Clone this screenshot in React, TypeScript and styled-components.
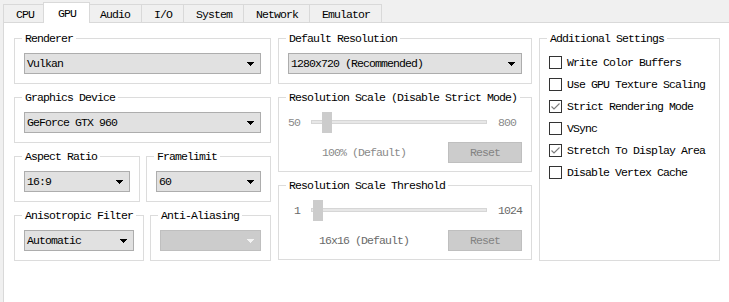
import React from "react";
import styled, { createGlobalStyle } from "styled-components";

const GlobalStyle = createGlobalStyle`
  html, body { margin: 0; padding: 0; background: #f0f0f0; }
  body {
    font-family: "Liberation Mono", "DejaVu Sans Mono", monospace;
    font-size: 11.5px;
    letter-spacing: -0.9px;
    color: #000;
  }
  * { box-sizing: border-box; }
`;

const Window = styled.div`
  width: 729px;
  height: 302px;
  overflow: hidden;
  background: #f0f0f0;
`;

const TabBar = styled.div`
  display: flex;
  align-items: flex-end;
  height: 22px;
  padding-left: 4px;
`;

const Tab = styled.div<{ $active?: boolean }>`
  position: relative;
  z-index: ${(p) => (p.$active ? 2 : 1)};
  display: flex;
  align-items: center;
  height: ${(p) => (p.$active ? 21 : 18)}px;
  margin: ${(p) => (p.$active ? "0 -2px -1px -3px" : "0 0 0 -1px")};
  padding: ${(p) => (p.$active ? "0 13px 0 14px" : "2px 11px 0 12px")};
  border: 1px solid #d9d9d9;
  border-bottom: none;
  background: ${(p) => (p.$active ? "#ffffff" : "#f0f0f0")};
  white-space: nowrap;
`;

const Panel = styled.div`
  margin-left: 3px;
  width: 727px;
  height: 290px;
  border: 1px solid #d9d9d9;
  background: #ffffff;
  padding: 9px 9px 0 10px;
  display: grid;
  grid-template-columns: 257px 254px 181px;
  column-gap: 7px;
  align-content: start;
`;

const Column = styled.div`
  display: flex;
  flex-direction: column;
  gap: 7px;
`;

const Pair = styled.div<{ $cols: string }>`
  display: grid;
  grid-template-columns: ${(p) => p.$cols};
  column-gap: 6px;
`;

const Group = styled.fieldset<{ $pb?: number; $pt?: number }>`
  margin: 0;
  min-width: 0;
  border: 1px solid #dcdcdc;
  padding: ${(p) => p.$pt ?? 9}px 9px ${(p) => p.$pb ?? 9}px 9px;
`;

const Title = styled.legend`
  margin-left: -2px;
  padding: 0 3px;
  height: 12px;
  line-height: 13px;
  white-space: nowrap;
`;

const ComboBox = styled.div<{ $disabled?: boolean }>`
  display: flex;
  align-items: center;
  justify-content: space-between;
  height: 21px;
  padding: 0 6px 0 2px;
  background: ${(p) => (p.$disabled ? "#cccccc" : "#e1e1e1")};
  border: 1px solid ${(p) => (p.$disabled ? "#bfbfbf" : "#adadad")};
  white-space: nowrap;
`;

const ArrowSvg = styled.svg`
  flex: none;
  display: block;
`;

const Arrow = ({ color }: { color: string }) => (
  <ArrowSvg width="7" height="4" viewBox="0 0 7 4" shapeRendering="crispEdges">
    <rect x="0" y="0" width="7" height="1" fill={color} />
    <rect x="1" y="1" width="5" height="1" fill={color} />
    <rect x="2" y="2" width="3" height="1" fill={color} />
    <rect x="3" y="3" width="1" height="1" fill={color} />
  </ArrowSvg>
);

const Combo = ({ value, disabled }: { value?: string; disabled?: boolean }) => (
  <ComboBox $disabled={disabled}>
    <span>{value ?? ""}</span>
    <Arrow color={disabled ? "#f4f4f4" : "#000000"} />
  </ComboBox>
);

const SliderRow = styled.div`
  display: flex;
  height: 21px;
  align-items: center;
`;

const RangeLabel = styled.span<{ $side: "min" | "max"; $tone: string }>`
  flex: none;
  width: ${(p) => (p.$side === "min" ? 12 : 24)}px;
  margin: ${(p) => (p.$side === "min" ? "0 11px 0 0" : "0 0 0 11px")};
  text-align: ${(p) => (p.$side === "min" ? "right" : "left")};
  color: ${(p) => p.$tone};
  white-space: nowrap;
`;

const Track = styled.div`
  position: relative;
  flex: 1;
  height: 21px;
`;

const Groove = styled.div`
  margin-top: 8px;
  height: 4px;
  background: #e7e7e7;
  border: 1px solid #d6d6d6;
`;

const Handle = styled.div`
  position: absolute;
  top: 0;
  width: 10px;
  height: 21px;
  background: #cccccc;
`;

const ActionRow = styled.div`
  display: flex;
  align-items: center;
  height: 21px;
  margin-top: 9px;
`;

const ValueText = styled.span<{ $tone: string }>`
  flex: 1;
  text-align: center;
  color: ${(p) => p.$tone};
  white-space: nowrap;
`;

const ResetButton = styled.button`
  flex: none;
  width: 74px;
  height: 21px;
  margin-left: 8px;
  padding: 0;
  background: #cccccc;
  border: 1px solid #bfbfbf;
  color: #838383;
  font: inherit;
  letter-spacing: inherit;
`;

const CheckList = styled.div`
  display: flex;
  flex-direction: column;
`;

const CheckRow = styled.div`
  display: flex;
  align-items: flex-start;
  height: 22px;
  padding-top: 4px;
`;

const Box = styled.span`
  flex: none;
  width: 13px;
  height: 13px;
  border: 1px solid #333333;
  background: #ffffff;
  margin-right: 5px;
  display: flex;
  align-items: center;
  justify-content: center;
`;

const CheckLabel = styled.span`
  line-height: 14px;
  white-space: nowrap;
`;

const Check = ({ label, checked }: { label: string; checked?: boolean }) => (
  <CheckRow>
    <Box>
      {checked && (
        <svg width="11" height="11" viewBox="0 0 11 11">
          <polyline
            points="1.5,5.5 4,8 9.5,2.5"
            fill="none"
            stroke="#7a7a7a"
            strokeWidth="1.1"
          />
        </svg>
      )}
    </Box>
    <CheckLabel>{label}</CheckLabel>
  </CheckRow>
);

const SliderGroup = ({
  title,
  min,
  max,
  value,
  text,
  tone,
}: {
  title: string;
  min: number;
  max: number;
  value: number;
  text: string;
  tone: string;
}) => {
  const frac = (value - min) / (max - min);
  return (
    <Group $pb={8}>
      <Title>{title}</Title>
      <SliderRow>
        <RangeLabel $side="min" $tone={tone}>
          {min}
        </RangeLabel>
        <Track>
          <Groove />
          <Handle style={{ left: `calc((100% - 10px) * ${frac})` }} />
        </Track>
        <RangeLabel $side="max" $tone={tone}>
          {max}
        </RangeLabel>
      </SliderRow>
      <ActionRow>
        <ValueText $tone={tone}>{text}</ValueText>
        <ResetButton disabled>Reset</ResetButton>
      </ActionRow>
    </Group>
  );
};

const tabs = ["CPU", "GPU", "Audio", "I/O", "System", "Network", "Emulator"];

export default function App() {
  return (
    <Window>
      <GlobalStyle />
      <TabBar>
        {tabs.map((t) => (
          <Tab key={t} $active={t === "GPU"}>
            {t}
          </Tab>
        ))}
      </TabBar>
      <Panel>
        <Column>
          <Group>
            <Title>Renderer</Title>
            <Combo value="Vulkan" />
          </Group>
          <Group>
            <Title>Graphics Device</Title>
            <Combo value="GeForce GTX 960" />
          </Group>
          <Pair $cols="126px 125px">
            <Group>
              <Title>Aspect Ratio</Title>
              <Combo value="16:9" />
            </Group>
            <Group>
              <Title>Framelimit</Title>
              <Combo value="60" />
            </Group>
          </Pair>
          <Pair $cols="130px 121px">
            <Group>
              <Title>Anisotropic Filter</Title>
              <Combo value="Automatic" />
            </Group>
            <Group>
              <Title>Anti-Aliasing</Title>
              <Combo disabled />
            </Group>
          </Pair>
        </Column>
        <Column>
          <Group>
            <Title>Default Resolution</Title>
            <Combo value="1280x720 (Recommended)" />
          </Group>
          <SliderGroup
            title="Resolution Scale (Disable Strict Mode)"
            min={50}
            max={800}
            value={100}
            text="100% (Default)"
            tone="#8a8a8a"
          />
          <SliderGroup
            title="Resolution Scale Threshold"
            min={1}
            max={1024}
            value={16}
            text="16x16 (Default)"
            tone="#6a6a6a"
          />
        </Column>
        <Group $pt={8}>
          <Title>Additional Settings</Title>
          <CheckList>
            <Check label="Write Color Buffers" />
            <Check label="Use GPU Texture Scaling" />
            <Check label="Strict Rendering Mode" checked />
            <Check label="VSync" />
            <Check label="Stretch To Display Area" checked />
            <Check label="Disable Vertex Cache" />
          </CheckList>
        </Group>
      </Panel>
    </Window>
  );
}
